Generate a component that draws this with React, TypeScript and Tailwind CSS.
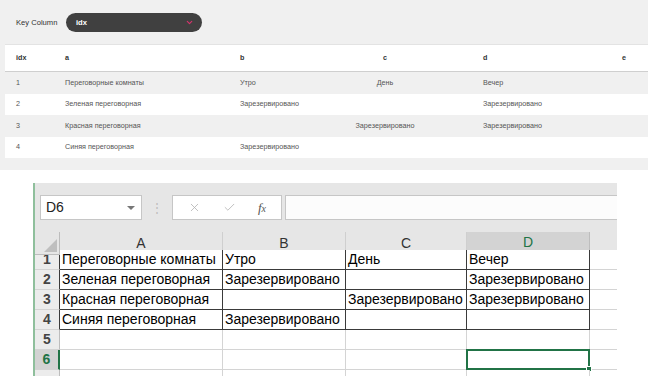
import { ChevronDown, X, Check } from "lucide-react";

const rows = [
  { idx: "1", a: "Переговорные комнаты", b: "Утро", c: "День", d: "Вечер" },
  { idx: "2", a: "Зеленая переговорная", b: "Зарезервировано", c: "", d: "Зарезервировано" },
  { idx: "3", a: "Красная переговорная", b: "", c: "Зарезервировано", d: "Зарезервировано" },
  { idx: "4", a: "Синяя переговорная", b: "Зарезервировано", c: "", d: "" },
];

const sans = { fontFamily: '"Liberation Sans", Arial, sans-serif' };

function KeyTable() {
  const grid = "grid grid-cols-[60px_175px_106px_78px_59px_139px_1fr] items-center";
  return (
    <div className="ml-[5px] w-[643px] border-t border-[#e3e3e3] text-[7.2px] text-[#555]">
      <div className={`${grid} h-[27px] border-b border-[#cfcfcf] bg-white font-bold text-[#333]`}>
        <span className="pl-[11px]">idx</span>
        <span>a</span>
        <span>b</span>
        <span className="text-center">c</span>
        <span />
        <span>d</span>
        <span>e</span>
      </div>
      {rows.map((r, i) => (
        <div
          key={r.idx}
          className={`${grid} ${i % 2 ? "h-[21px] bg-white" : "h-[22px] bg-[#f0f0f0]"}`}
        >
          <span className="pl-[11px]">{r.idx}</span>
          <span>{r.a}</span>
          <span>{r.b}</span>
          <span className="text-center whitespace-nowrap">{r.c}</span>
          <span />
          <span>{r.d}</span>
          <span />
        </div>
      ))}
    </div>
  );
}

const cols = ["A", "B", "C", "D"];
const excelGrid = "grid grid-cols-[25px_163px_123px_121px_123px_1fr]";

function ExcelSheet() {
  const data = rows.map((r) => [r.a, r.b, r.c, r.d]);
  const allRows = [1, 2, 3, 4, 5, 6, 7];
  return (
    <div
      className="ml-[33px] mt-[13px] w-[584px] border-l-2 border-[#8fbf9c] bg-[#e6e6e6]"
      style={sans}
    >
      {/* панель формул */}
      <div className="flex h-[49px] items-center pl-[5px]">
        <div className="flex h-[25px] w-[102px] items-center justify-between border border-[#c6c6c6] bg-white pl-[5px] pr-[6px] text-[14px] text-[#222]">
          <span>D6</span>
          <span className="h-0 w-0 border-x-[4px] border-t-[4px] border-x-transparent border-t-[#777]" />
        </div>
        <span className="w-[30px] text-center text-[12px] leading-none text-[#bdbdbd]">⋮</span>
        <div className="flex h-[25px] w-[110px] items-center justify-around border border-[#c6c6c6] bg-white px-[4px]">
          <X className="size-[13px] text-[#b3b3b3]" strokeWidth={1.5} />
          <Check className="size-[13px] text-[#b3b3b3]" strokeWidth={1.5} />
          <span
            className="text-[13px] italic text-[#555]"
            style={{ fontFamily: '"Liberation Serif", serif' }}
          >
            f<span className="text-[10px]">x</span>
          </span>
        </div>
        <div className="ml-[3px] h-[25px] flex-1 border-y border-l border-[#c6c6c6] bg-[#fcfcfc]" />
      </div>

      {/* сетка */}
      <div className={`${excelGrid} h-[18px] text-[14px] text-[#333]`}>
        <div className="relative border-r border-b border-[#bdbdbd] bg-[#e6e6e6]">
          <svg className="absolute right-[2px] bottom-[2px]" width="13" height="13" viewBox="0 0 13 13">
            <polygon points="13,0 13,13 0,13" fill="#bfbfbf" />
          </svg>
        </div>
        {cols.map((c) => (
          <div
            key={c}
            className={
              c === "D"
                ? "flex items-center justify-center border-r border-b-2 border-r-[#bdbdbd] border-b-[#217346] bg-[#d3d3d3] text-[#217346]"
                : "flex items-center justify-center border-r border-b border-r-[#cfcfcf] border-b-[#3a3a3a] bg-[#e6e6e6]"
            }
          >
            {c}
          </div>
        ))}
        <div className="border-b border-[#bdbdbd] bg-[#e6e6e6]" />
      </div>

      {allRows.map((n) => {
        const inData = n <= 4;
        const sel = n === 6;
        return (
          <div key={n} className={`${excelGrid} h-[20px] text-[14px] leading-[19px] text-black`}>
            <div
              className={`flex items-center justify-center border-b border-b-[#d4d4d4] border-r text-[14px] font-bold ${
                sel
                  ? "border-r-2 border-r-[#217346] bg-[#d3d3d3] text-[#217346]"
                  : inData
                    ? "border-r-[#3a3a3a] bg-[#ececec] text-[#444]"
                    : "border-r-[#bdbdbd] bg-[#ececec] text-[#444]"
              }`}
            >
              {n < 7 ? n : ""}
            </div>
            {cols.map((c, ci) => (
              <div
                key={c}
                className={`relative overflow-visible whitespace-nowrap bg-white pl-[2px] border-r border-b ${
                  inData ? "border-[#3a3a3a]" : "border-[#d4d4d4]"
                }`}
              >
                {inData ? data[n - 1][ci] : ""}
                {sel && c === "D" && (
                  <div className="absolute -left-[1px] -top-[1px] -right-[1px] -bottom-[1px] border-2 border-[#217346]">
                    <span className="absolute -right-[4px] -bottom-[4px] size-[6px] border border-white bg-[#217346]" />
                  </div>
                )}
              </div>
            ))}
            <div className="border-b border-[#d4d4d4] bg-white" />
          </div>
        );
      })}
    </div>
  );
}

export default function App() {
  return (
    <div className="h-[376px] w-[650px] overflow-hidden bg-white" style={sans}>
      <div className="h-[170px] w-[648px] bg-[#f0f0f0]">
        <div className="flex items-center pl-[16px] pt-[13px]">
          <span className="w-[50px] text-[7.6px] text-[#333]">Key Column</span>
          <div className="flex h-[19px] w-[136px] items-center justify-between rounded-full bg-[#404040] pl-[10px] pr-[8px]">
            <span className="text-[7.6px] font-bold text-white">idx</span>
            <ChevronDown className="size-[9px] text-[#d6336c]" strokeWidth={3} />
          </div>
        </div>
        <div className="mt-[12px]">
          <KeyTable />
        </div>
      </div>
      <ExcelSheet />
    </div>
  );
}
